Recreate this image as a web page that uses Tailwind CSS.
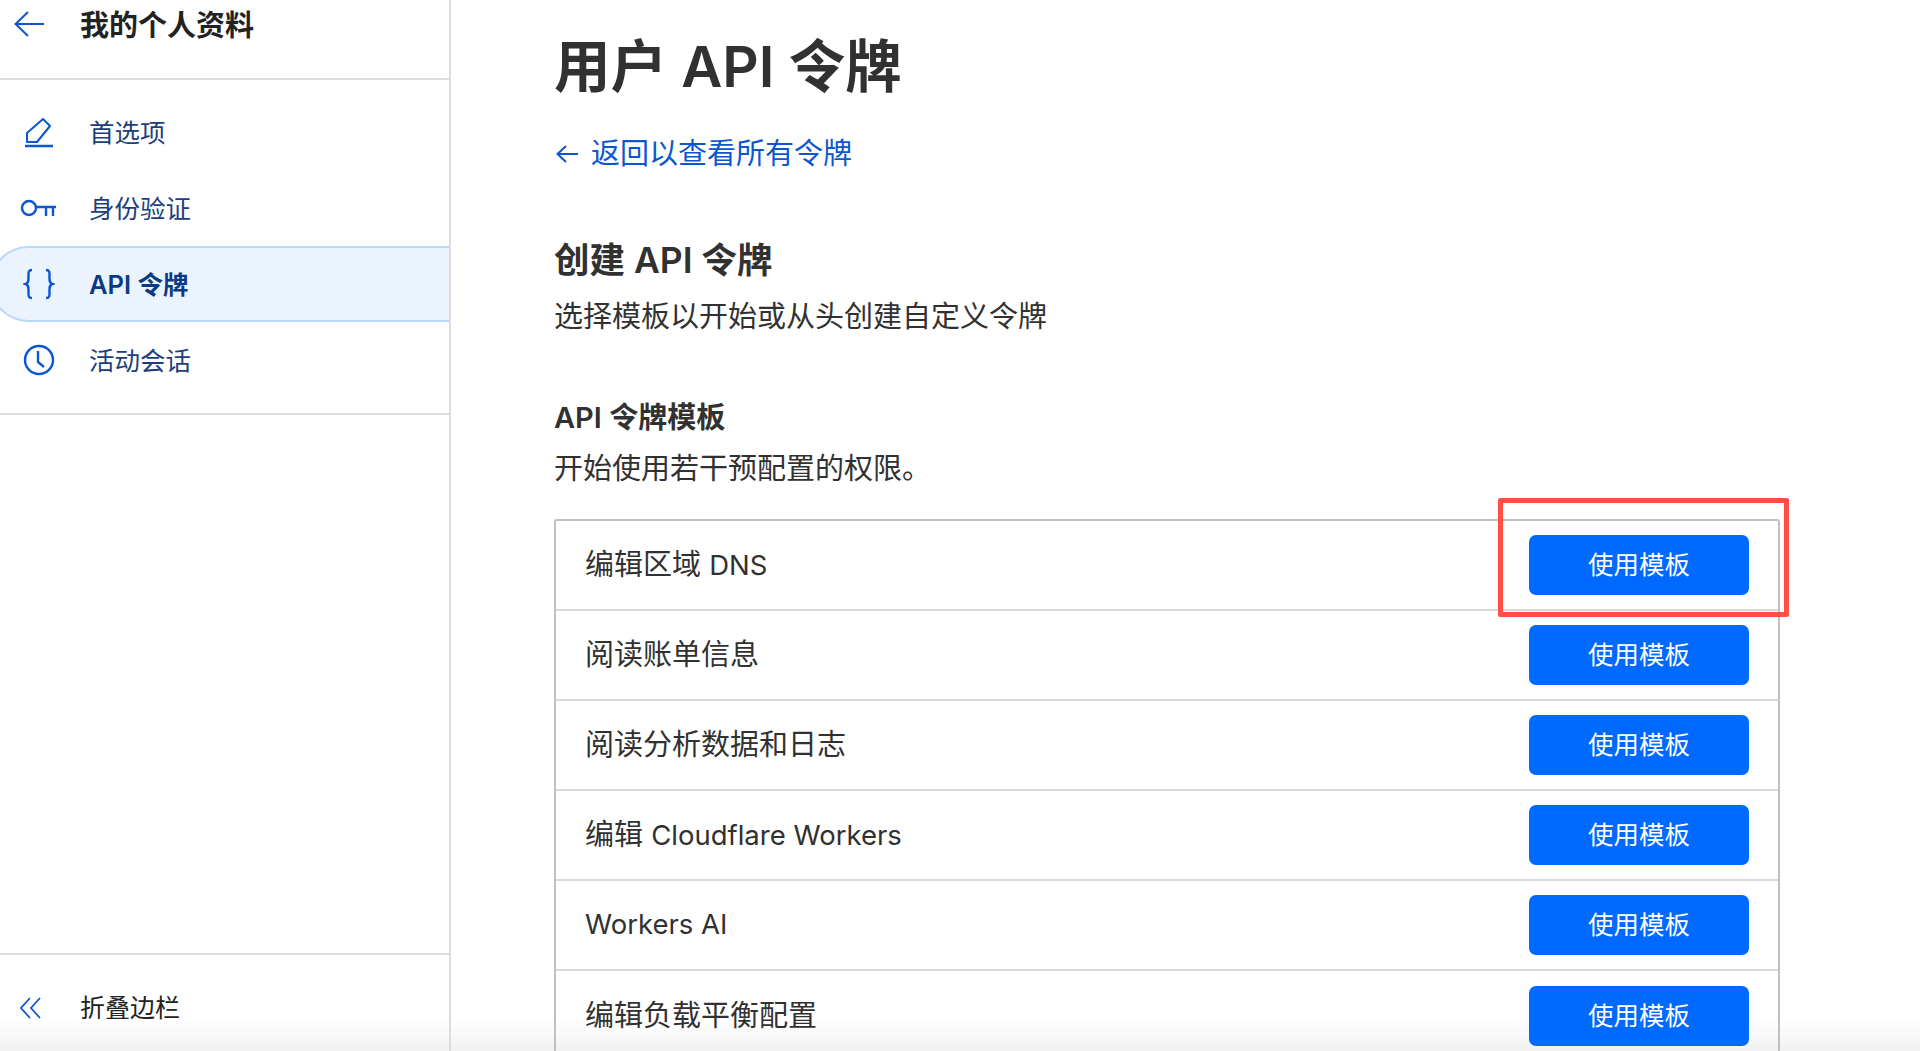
<!DOCTYPE html>
<html lang="zh">
<head>
    <meta charset="UTF-8">
    <title>用户 API 令牌</title>
    <script src="https://cdn.jsdelivr.net/npm/@tailwindcss/browser@4"></script>
</head>
<body class="bg-white text-[#313131] font-['Inter','Noto_Sans_CJK_SC',sans-serif]">
<div class="relative flex h-[1051px] overflow-hidden bg-gradient-to-b from-white from-97% to-[#f1f1f1]">

    <!-- 侧边栏 -->
    <aside class="flex flex-col w-[451px] shrink-0 border-r-2 border-[#dcdcdc] overflow-hidden">
        <div class="flex items-start h-[80px] border-b-2 border-[#dcdcdc] pl-[13px]">
            <svg class="mt-[10px] w-[32px] h-[28px]" viewBox="0 0 32 28" fill="none" stroke="#0b57d0" stroke-width="2"><path d="M31 14H3M15 2 2.500 14 15 26"/></svg>
            <span class="ml-[35px] text-[29px] leading-[52px] font-semibold text-[#222]">我的个人资料</span>
        </div>
        <nav class="pt-[14px] pb-[15px] border-b-2 border-[#dcdcdc] text-[25.500px] text-[#1c3f7c]">
            <a class="flex items-center h-[76px] pl-[23px]">
                <svg class="w-[32px] h-[32px] mr-[34px]" viewBox="0 0 32 32" fill="none" stroke="#0b57d0" stroke-width="2"><path d="M2 30h28" stroke-width="2.500"/><path d="M4 26V17L20 3l7 7-13 16z" stroke-linejoin="round"/></svg>
                <span class="mt-[2px]">首选项</span>
            </a>
            <a class="flex items-center h-[76px] pl-[23px]">
                <svg class="w-[36px] h-[32px] -ml-[3px] mr-[33px]" viewBox="0 0 36 32" fill="none" stroke="#0b57d0" stroke-width="2.400"><circle cx="9" cy="16" r="7"/><path d="M16 15h21M26 15v9M33 15v9"/></svg>
                <span class="mt-[2px]">身份验证</span>
            </a>
            <a class="flex items-center h-[76px] -ml-[10px] pl-[33px] bg-[#ebf3fe] border-2 border-r-0 border-[#b9d6fb] rounded-l-[38px] font-semibold text-[#0a3a82]">
                <svg class="w-[32px] h-[32px] -ml-[2px] mr-[34px]" viewBox="0 0 32 32" fill="none" stroke="#0b57d0" stroke-width="2.400"><path d="M9 2C5 2 5.500 5 5.500 8c0 4 .5 7-3 8 3.500 1 3 4 3 8 0 3-.5 6 3.500 6"/><path d="M23 2c4 0 3.500 3 3.500 6 0 4-.5 7 3 8-3.500 1-3 4-3 8 0 3 .5 6-3.500 6"/></svg>
                <span class="mt-[2px]">API 令牌</span>
            </a>
            <a class="flex items-center h-[76px] pl-[23px]">
                <svg class="w-[32px] h-[32px] mr-[34px]" viewBox="0 0 32 32" fill="none" stroke="#0b57d0" stroke-width="2.400"><circle cx="16" cy="16" r="14"/><path d="M15 7v11l6 5"/></svg>
                <span class="mt-[2px]">活动会话</span>
            </a>
        </nav>
        <div class="flex-1"></div>
        <div class="flex items-start h-[98px] border-t-2 border-[#dcdcdc] pl-[19px] pt-[41px]">
            <svg class="w-[22px] h-[24px]" viewBox="0 0 22 24" fill="none" stroke="#0b57d0" stroke-width="1.800"><path d="M11 2 2 12l9 10M21 2l-9 10 9 10"/></svg>
            <span class="ml-[39px] -mt-[5px] text-[25px] leading-[34px] text-[#222]">折叠边栏</span>
        </div>
    </aside>

    <!-- 主内容 -->
    <main class="flex-1 pl-[103px] pr-[140px]">
        <h1 class="h-[131px] pt-[31px] text-[56.500px] leading-[72px] font-semibold">用户 API 令牌</h1>
        <a class="flex items-center h-[46px] text-[29px] text-[#0b57d0]">
            <svg class="w-[24px] h-[20px] ml-[1px] mr-[12px]" viewBox="0 0 24 20" fill="none" stroke="#0b57d0" stroke-width="2"><path d="M23 10H3M11 2 2.500 10l8.500 8"/></svg>
            <span>返回以查看所有令牌</span>
        </a>
        <h2 class="mt-[61px] h-[46px] text-[35.500px] leading-[46px] font-semibold">创建 API 令牌</h2>
        <p class="mt-[13px] h-[40px] text-[29px] leading-[40px]">选择模板以开始或从头创建自定义令牌</p>
        <h3 class="mt-[60px] h-[42px] text-[29px] leading-[42px] font-semibold">API 令牌模板</h3>
        <p class="mt-[10px] h-[40px] text-[29px] leading-[40px]">开始使用若干预配置的权限。</p>

        <div class="mt-[30px] border-2 border-b-0 border-[#c0c0c0] rounded-t-[3px] text-[29px]">
            <div class="flex items-center justify-between h-[90px] pl-[29px] pr-[29px] border-b-2 border-[#d9d9d9]">
                <span>编辑区域 <span class="text-[27.500px]">DNS</span></span>
                <button class="w-[220px] h-[60px] bg-[#0069ff] rounded-[7px] text-white text-[25.500px]">使用模板</button>
            </div>
            <div class="flex items-center justify-between h-[90px] pl-[29px] pr-[29px] border-b-2 border-[#d9d9d9]">
                <span>阅读账单信息</span>
                <button class="w-[220px] h-[60px] bg-[#0069ff] rounded-[7px] text-white text-[25.500px]">使用模板</button>
            </div>
            <div class="flex items-center justify-between h-[90px] pl-[29px] pr-[29px] border-b-2 border-[#d9d9d9]">
                <span>阅读分析数据和日志</span>
                <button class="w-[220px] h-[60px] bg-[#0069ff] rounded-[7px] text-white text-[25.500px]">使用模板</button>
            </div>
            <div class="flex items-center justify-between h-[90px] pl-[29px] pr-[29px] border-b-2 border-[#d9d9d9]">
                <span>编辑 <span class="text-[27.500px]">Cloudflare Workers</span></span>
                <button class="w-[220px] h-[60px] bg-[#0069ff] rounded-[7px] text-white text-[25.500px]">使用模板</button>
            </div>
            <div class="flex items-center justify-between h-[90px] pl-[29px] pr-[29px] border-b-2 border-[#d9d9d9]">
                <span class="text-[27.500px]">Workers AI</span>
                <button class="w-[220px] h-[60px] bg-[#0069ff] rounded-[7px] text-white text-[25.500px]">使用模板</button>
            </div>
            <div class="flex items-center justify-between h-[90px] pl-[29px] pr-[29px]">
                <span>编辑负载平衡配置</span>
                <button class="w-[220px] h-[60px] bg-[#0069ff] rounded-[7px] text-white text-[25.500px]">使用模板</button>
            </div>
        </div>
    </main>

    <!-- 红色标注框 -->
    <div class="absolute left-[1498px] top-[498px] w-[291px] h-[119px] border-[5px] border-[#ff5043] rounded-[2px]"></div>
</div>
</body>
</html>
